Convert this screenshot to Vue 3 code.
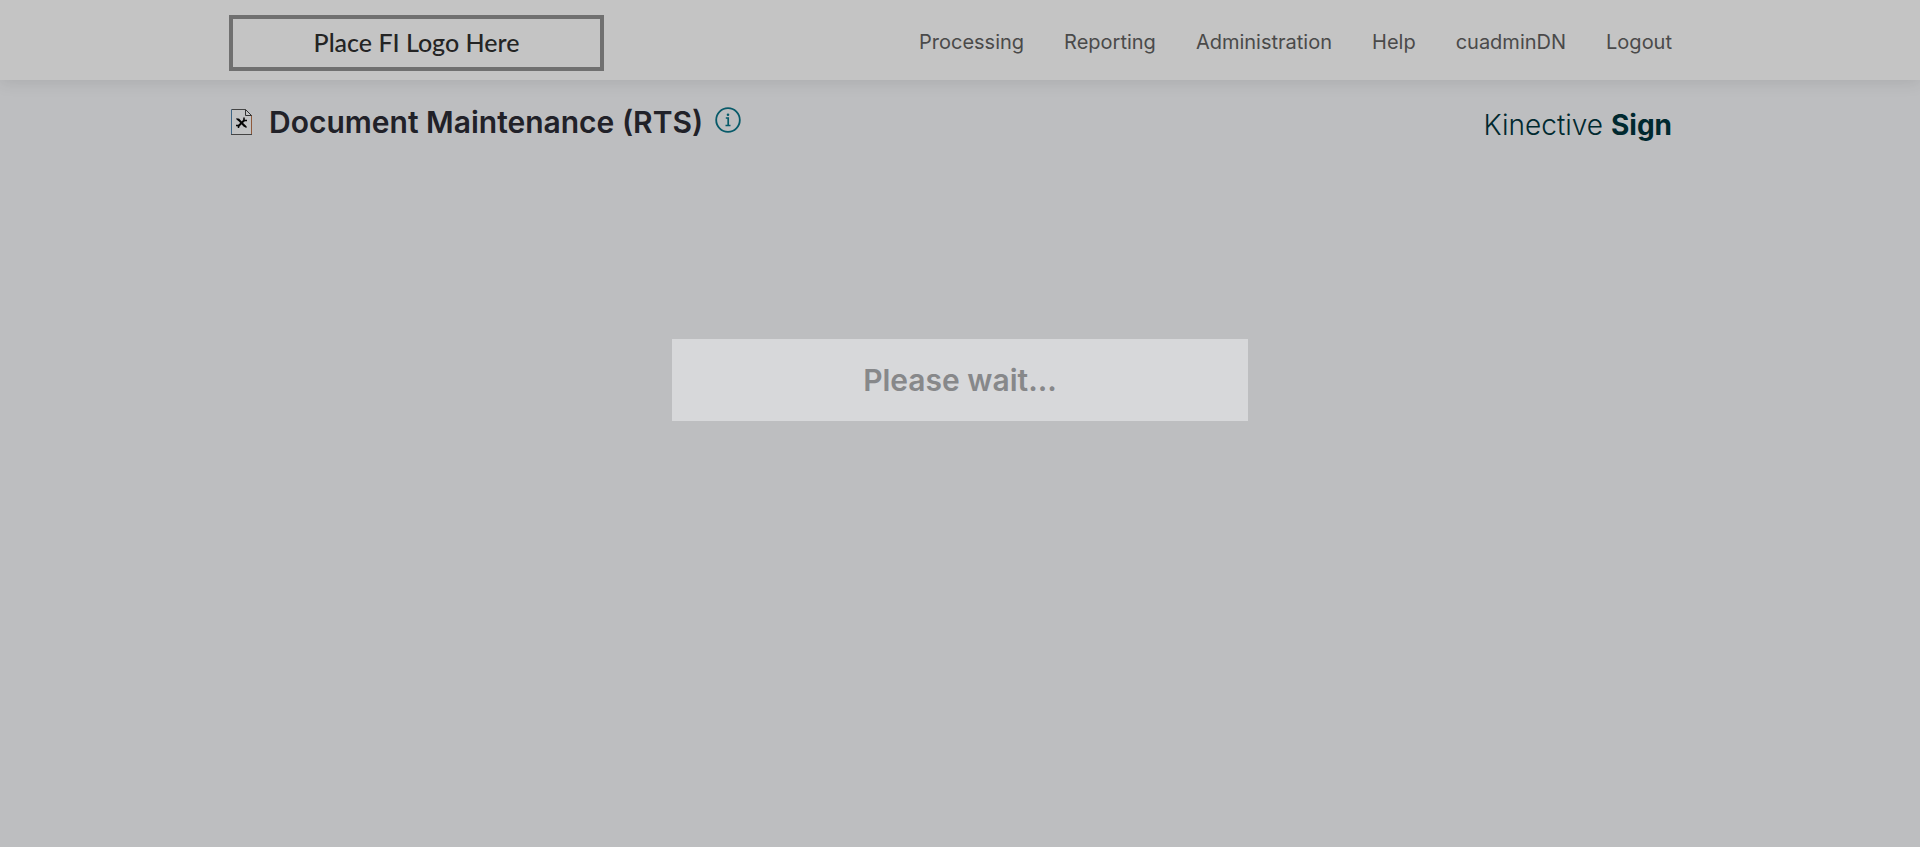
<script setup>
const links = ['Processing', 'Reporting', 'Administration', 'Help', 'cuadminDN', 'Logout']
</script>

<template>
  <div class="page">
    <header class="topbar">
      <div class="container bar">
        <a class="fi-logo" href="#">Place FI Logo Here</a>
        <nav class="menu" aria-label="Main">
          <a v-for="link in links" :key="link" href="#">{{ link }}</a>
        </nav>
      </div>
    </header>

    <main class="container heading">
      <div class="title">
        <svg class="doc" width="21" height="26" viewBox="0 0 21 26" aria-hidden="true">
          <path d="M14.500 .5H.5v25H20.500V6Z" fill="#c2c3c4" />
          <g fill="none">
            <path d="M14.500 .5H.5" stroke="#444" />
            <path d="M.5 .5V25" stroke="#3f6787" />
            <path d="M0 25.500H21" stroke="#444" />
            <path d="M20.500 6V25" stroke="#8f5a3c" />
            <path d="M14.500 .5V6.500H20.500Z" stroke="#333" />
            <path d="M7 10L14 17.500" stroke="#050505" stroke-width="2" />
            <path d="M13.500 11L7 17.500" stroke="#050505" stroke-width="2" />
            <path d="M5.500 9.500L8 11.500M13 8.500V11.500H16M5 16.500H7.500V19M13 16L15.500 18.500" stroke="#050505" stroke-width="1.500" />
          </g>
        </svg>
        <h1>Document Maintenance (RTS)</h1>
        <button class="info" type="button" aria-label="Page information">
          <svg width="26" height="26" viewBox="0 0 26 26" aria-hidden="true">
            <circle cx="13" cy="13" r="11.800" fill="none" stroke="#075a69" stroke-width="1.800" />
            <path d="M10.800 11H13.200V18.500M10.500 18.500H15.500" fill="none" stroke="#075a69" stroke-width="1.700" />
            <circle cx="13" cy="7.800" r="1.300" fill="#075a69" />
          </svg>
        </button>
      </div>
      <div class="brand">Kinective <strong>Sign</strong></div>
    </main>

    <div class="wait" role="status">Please wait...</div>
  </div>
</template>

<style>
body {
  background: #bdbec0;
}
</style>

<style scoped>
.page {
  position: relative;
  min-height: 100vh;
  background: #bdbec0;
  color: #212128;
  font-family: Inter, "Liberation Sans", sans-serif;
}

.page,
.page * {
  box-sizing: border-box;
}

.container {
  display: flex;
  justify-content: space-between;
  max-width: 1462px;
  margin: 0 auto;
  padding-right: 19px;
}

.topbar {
  background: #c4c4c4;
  box-shadow: 0 2px 16px rgba(0, 0, 0, 0.1);
}

.bar {
  align-items: flex-start;
  height: 80px;
  padding-top: 15px;
}

.fi-logo {
  display: flex;
  align-items: center;
  justify-content: center;
  width: 375px;
  height: 56px;
  padding-bottom: 2px;
  border: 4px solid #707070;
  color: #242424;
  font-family: Lato, sans-serif;
  font-size: 25px;
  font-weight: 500;
  line-height: 28px;
  text-decoration: none;
}

.menu {
  display: flex;
  gap: 40px;
  padding-top: 12px;
}

.menu a {
  color: #4a4a4a;
  font-size: 20px;
  line-height: 30px;
  text-decoration: none;
}

.heading {
  align-items: flex-start;
  padding-top: 24px;
}

.title {
  display: flex;
  align-items: center;
}

.doc {
  margin: 0 17px 0 2px;
}

h1 {
  margin: 0;
  font-size: 30px;
  font-weight: 600;
  line-height: 36px;
}

.info {
  display: flex;
  margin: 0 0 4px 12px;
  padding: 0;
  border: 0;
  background: none;
}

.brand {
  padding-top: 4px;
  color: #00292f;
  font-size: 28px;
  font-weight: 300;
  line-height: 34px;
}

.brand strong {
  font-weight: 700;
}

.wait {
  position: absolute;
  top: 40%;
  left: 35%;
  width: 30%;
  padding: 23px 0;
  background: #d7d8da;
  color: #87888a;
  font-size: 30px;
  font-weight: 600;
  line-height: 36px;
  text-align: center;
}
</style>
